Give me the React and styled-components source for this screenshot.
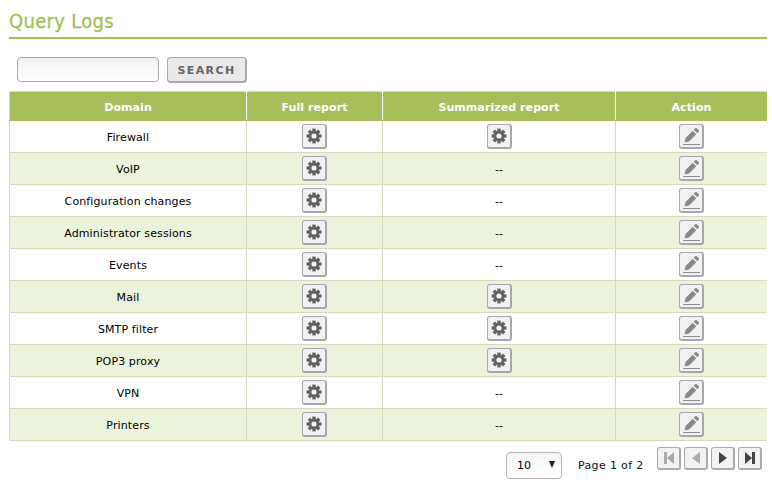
import React from 'react';
import styled, { createGlobalStyle } from 'styled-components';

const GlobalStyle = createGlobalStyle`
  html, body { margin: 0; padding: 0; background: #fff; }
  body { font-family: "DejaVu Sans", sans-serif; font-size: 11px; color: #000; }
`;

const rows = [
  { name: 'Firewall', summary: true },
  { name: 'VoIP' },
  { name: 'Configuration changes' },
  { name: 'Administrator sessions' },
  { name: 'Events' },
  { name: 'Mail', summary: true },
  { name: 'SMTP filter', summary: true },
  { name: 'POP3 proxy', summary: true },
  { name: 'VPN' },
  { name: 'Printers' },
];

const Page = styled.div`
  width: 758px;
  height: 486px;
  margin-left: 9px;
  overflow: hidden;
`;

const Title = styled.h1`
  margin: 0;
  height: 37px;
  border-bottom: 2px solid #a6bf5a;
  padding: 0;
  font-family: "DejaVu Sans Condensed", "DejaVu Sans", sans-serif;
  font-stretch: condensed;
  font-weight: normal;
  font-size: 20px;
  letter-spacing: 0.3px;
  -webkit-text-stroke: 0.35px #a6bf5a;
  line-height: 43px;
  color: #a6bf5a;
`;

const SearchBar = styled.form`
  display: flex;
  align-items: flex-start;
  gap: 8px;
  margin: 18px 0 8px 8px;
  height: 26px;
`;

const SearchInput = styled.input`
  box-sizing: border-box;
  width: 142px;
  height: 25px;
  border: 1px solid #aaa;
  border-radius: 4px;
  background: linear-gradient(#f1f1f1, #fff);
  padding: 0 4px;
`;

const SearchButton = styled.button`
  box-sizing: border-box;
  width: 80px;
  height: 26px;
  border: 1px solid #a8a8a8;
  border-bottom-width: 2px;
  border-right-width: 2px;
  border-radius: 4px;
  background: #e9e9e9;
  font-family: "DejaVu Sans", sans-serif;
  font-weight: bold;
  font-size: 11px;
  letter-spacing: 1.4px;
  color: #666;
  padding: 1px 0 0;
`;

const Table = styled.table`
  width: 758px;
  table-layout: fixed;
  border-collapse: collapse;
`;

const Head = styled.th`
  height: 26px;
  padding: 2px 0 0;
  background: #a6bf5a;
  border: 1px solid #d5dabf;
  border-bottom-color: #a6bf5a;
  border-left-color: ${p => (p.$first ? '#d5dabf' : '#fff')};
  border-right-color: ${p => (p.$last ? '#d5dabf' : '#fff')};
  color: #fff;
  font-size: 11px;
  font-weight: bold;
  letter-spacing: 0.08px;
  text-align: center;
`;

const Row = styled.tr`
  background: ${p => (p.$alt ? '#ebf3dc' : '#fff')};
`;

const Cell = styled.td`
  height: 31px;
  padding: 0;
  border: 1px solid #d5dabf;
  letter-spacing: 0.12px;
  text-align: center;
  vertical-align: middle;
`;

const CellText = styled.span`
  display: block;
  padding-top: 2px;
`;

const IconButton = styled.span`
  box-sizing: border-box;
  display: inline-flex;
  align-items: center;
  justify-content: center;
  vertical-align: middle;
  width: 25px;
  height: 25px;
  border: 1px solid #a8a8a8;
  border-bottom-width: 2px;
  border-right-width: 2px;
  border-radius: 3px;
  background: #f2f2f2;
`;

const Pager = styled.div`
  display: flex;
  align-items: flex-start;
  margin-top: 6px;
  padding-left: 497px;
`;

const PageSelect = styled.div`
  box-sizing: border-box;
  display: flex;
  align-items: center;
  justify-content: space-between;
  width: 56px;
  height: 27px;
  margin-top: 5px;
  padding: 0 6px 0 10px;
  border: 1px solid #b5b5b5;
  border-radius: 4px;
  background: linear-gradient(#f5f5f5, #fff);
`;

const Arrow = styled.span`
  width: 0;
  height: 0;
  margin-bottom: 3px;
  border-left: 3.5px solid transparent;
  border-right: 3.5px solid transparent;
  border-top: 7px solid #222;
`;

const PageLabel = styled.span`
  width: 65px;
  margin: 12px 14px 0 16px;
  white-space: nowrap;
  letter-spacing: 0.35px;
  color: #111;
`;

const NavGroup = styled.div`
  display: flex;
  gap: 3px;
`;

const NavButton = styled.span`
  box-sizing: border-box;
  display: flex;
  align-items: center;
  justify-content: center;
  width: 24px;
  height: 23px;
  border: 1px solid #aaa;
  border-bottom-width: 2px;
  border-right-width: 2px;
  border-radius: 3px;
  background: #f2f2f2;
  color: ${p => (p.$off ? '#aaa' : '#444')};
`;

const Gear = () => {
  const teeth = [0, 45, 90, 135];
  return (
    <svg width="16" height="16" viewBox="0 0 16 16">
      {teeth.map(a => (
        <rect key={a} x="6.3" y="0.6" width="3.4" height="14.8" fill="#606060" transform={`rotate(${a} 8 8)`} />
      ))}
      <circle cx="8" cy="8" r="5" fill="#606060" />
      <circle cx="8" cy="8" r="2.6" fill="#f2f2f2" />
    </svg>
  );
};

const Pencil = () => (
  <svg width="19" height="19" viewBox="0 0 19 19">
    <path d="M13 1.5c.6-.6 1.6-.6 2.2 0l1.3 1.3c.6.6.6 1.6 0 2.2l-1.2 1.2-3.5-3.5zM10.8 3.7l3.5 3.5-7.3 7.3-4.5 1 1-4.5z" fill="#8a8a8a" />
    <rect x="1" y="17" width="17" height="1" fill="#8a8a8a" />
  </svg>
);

const NavIcon = ({ d }) => (
  <svg width="14" height="15" viewBox="0 0 14 15">
    <path d={d} fill="currentColor" />
  </svg>
);

const App = () => (
  <Page>
    <GlobalStyle />
    <Title>Query Logs</Title>
    <SearchBar onSubmit={e => e.preventDefault()}>
      <SearchInput type="text" />
      <SearchButton type="submit">SEARCH</SearchButton>
    </SearchBar>
    <Table>
      <colgroup>
        <col style={{ width: 237 }} />
        <col style={{ width: 136 }} />
        <col style={{ width: 233 }} />
        <col style={{ width: 152 }} />
      </colgroup>
      <thead>
        <tr>
          <Head $first>Domain</Head>
          <Head>Full report</Head>
          <Head>Summarized report</Head>
          <Head $last>Action</Head>
        </tr>
      </thead>
      <tbody>
        {rows.map((r, i) => (
          <Row key={r.name} $alt={i % 2 === 1}>
            <Cell><CellText>{r.name}</CellText></Cell>
            <Cell><IconButton><Gear /></IconButton></Cell>
            <Cell>{r.summary ? <IconButton><Gear /></IconButton> : <CellText>--</CellText>}</Cell>
            <Cell><IconButton><Pencil /></IconButton></Cell>
          </Row>
        ))}
      </tbody>
    </Table>
    <Pager>
      <PageSelect>10<Arrow /></PageSelect>
      <PageLabel>Page 1 of 2</PageLabel>
      <NavGroup>
        <NavButton $off><NavIcon d="M2 1h3v12H2zM12 1v12L5 7z" /></NavButton>
        <NavButton $off><NavIcon d="M11 1v12L3 7z" /></NavButton>
        <NavButton><NavIcon d="M3 1v12l8-6z" /></NavButton>
        <NavButton><NavIcon d="M2 1v12l7-6zM9 1h3v12H9z" /></NavButton>
      </NavGroup>
    </Pager>
  </Page>
);

export default App;
